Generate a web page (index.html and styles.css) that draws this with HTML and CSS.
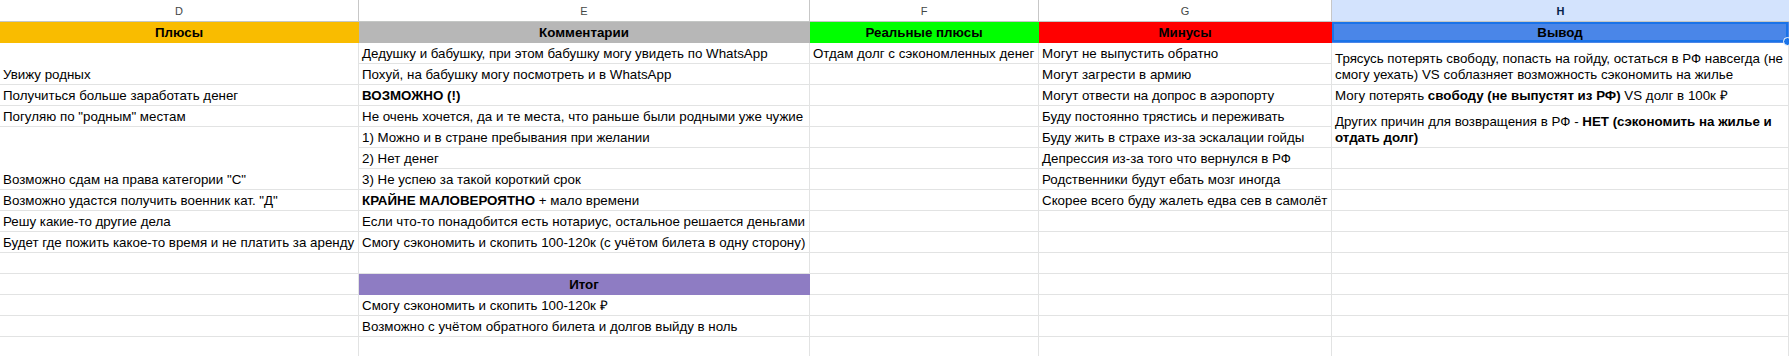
FILE: index.html
```html
<!DOCTYPE html>
<html lang="ru">
<head>
<meta charset="utf-8">
<title>Плюсы и минусы</title>
<link rel="stylesheet" href="styles.css">
</head>
<body>
<div class="sheet">
  <div class="col-heads">
    <div class="lh">D</div>
    <div class="lh">E</div>
    <div class="lh">F</div>
    <div class="lh">G</div>
    <div class="lh lh-sel">H</div>
  </div>
  <div class="grid">
    <div class="c hd hd-plus">Плюсы</div>
    <div class="c hd hd-comm">Комментарии</div>
    <div class="c hd hd-real">Реальные плюсы</div>
    <div class="c hd hd-minus">Минусы</div>
    <div class="c hd hd-out">Вывод<span class="sel-dot"></span></div>

    <div class="c span2">Увижу родных</div>
    <div class="c">Дедушку и бабушку, при этом бабушку могу увидеть по WhatsApp</div>
    <div class="c">Отдам долг с сэкономленных денег</div>
    <div class="c">Могут не выпустить обратно</div>
    <div class="c span2 wrap">Трясусь потерять свободу, попасть на гойду, остаться в РФ навсегда (не смогу уехать) VS соблазняет возможность сэкономить на жилье</div>

    <div class="c">Похуй, на бабушку могу посмотреть и в WhatsApp</div>
    <div class="c"></div>
    <div class="c">Могут загрести в армию</div>

    <div class="c">Получиться больше заработать денег</div>
    <div class="c"><b>ВОЗМОЖНО (!)</b></div>
    <div class="c"></div>
    <div class="c">Могут отвести на допрос в аэропорту</div>
    <div class="c"><span>Могу потерять <b>свободу (не выпустят из РФ)</b> VS долг в 100к ₽</span></div>

    <div class="c">Погуляю по "родным" местам</div>
    <div class="c">Не очень хочется, да и те места, что раньше были родными уже чужие</div>
    <div class="c"></div>
    <div class="c">Буду постоянно трястись и переживать</div>
    <div class="c span2 wrap"><span>Других причин для возвращения в РФ - <b>НЕТ (сэкономить на жилье и отдать долг)</b></span></div>

    <div class="c span3">Возможно сдам на права категории "С"</div>
    <div class="c">1) Можно и в стране пребывания при желании</div>
    <div class="c"></div>
    <div class="c">Буду жить в страхе из-за эскалации гойды</div>

    <div class="c">2) Нет денег</div>
    <div class="c"></div>
    <div class="c">Депрессия из-за того что вернулся в РФ</div>
    <div class="c"></div>

    <div class="c">3) Не успею за такой короткий срок</div>
    <div class="c"></div>
    <div class="c">Родственники будут ебать мозг иногда</div>
    <div class="c"></div>

    <div class="c">Возможно удастся получить военник кат. "Д"</div>
    <div class="c"><span><b>КРАЙНЕ МАЛОВЕРОЯТНО</b> + мало времени</span></div>
    <div class="c"></div>
    <div class="c">Скорее всего буду жалеть едва сев в самолёт</div>
    <div class="c"></div>

    <div class="c">Решу какие-то другие дела</div>
    <div class="c">Если что-то понадобится есть нотариус, остальное решается деньгами</div>
    <div class="c"></div>
    <div class="c"></div>
    <div class="c"></div>

    <div class="c">Будет где пожить какое-то время и не платить за аренду</div>
    <div class="c">Смогу сэкономить и скопить 100-120к (с учётом билета в одну сторону)</div>
    <div class="c"></div>
    <div class="c"></div>
    <div class="c"></div>

    <div class="c"></div>
    <div class="c"></div>
    <div class="c"></div>
    <div class="c"></div>
    <div class="c"></div>

    <div class="c"></div>
    <div class="c hd hd-total">Итог</div>
    <div class="c"></div>
    <div class="c"></div>
    <div class="c"></div>

    <div class="c"></div>
    <div class="c">Смогу сэкономить и скопить 100-120к ₽</div>
    <div class="c"></div>
    <div class="c"></div>
    <div class="c"></div>

    <div class="c"></div>
    <div class="c">Возможно с учётом обратного билета и долгов выйду в ноль</div>
    <div class="c"></div>
    <div class="c"></div>
    <div class="c"></div>

    <div class="c"></div>
    <div class="c"></div>
    <div class="c"></div>
    <div class="c"></div>
    <div class="c"></div>
  </div>
</div>
</body>
</html>
```
FILE: styles.css
```css
html, body {
  margin: 0;
  padding: 0;
  background: #ffffff;
  overflow: hidden;
}

.sheet {
  width: 1789px;
  font-family: "Liberation Sans", Arial, sans-serif;
  color: #000000;
}

.col-heads,
.grid {
  display: grid;
  grid-template-columns: 359px 451px 229px 293px 457px;
}

.col-heads {
  height: 22px;
}

.lh {
  box-sizing: border-box;
  height: 22px;
  border-right: 1px solid #c7c7c7;
  border-bottom: 1px solid #c4c7c5;
  display: flex;
  align-items: center;
  justify-content: center;
  font-size: 11px;
  color: #444746;
  background: #ffffff;
}

.lh-sel {
  background: #d3e3fd;
  color: #041e49;
  font-weight: bold;
  border-right: none;
}

.grid {
  grid-auto-rows: 21px;
}

.c {
  box-sizing: border-box;
  min-width: 0;
  border-right: 1px solid #e2e3e3;
  border-bottom: 1px solid #e2e3e3;
  padding: 0 3px 1px 3px;
  display: flex;
  align-items: flex-end;
  white-space: nowrap;
  overflow: hidden;
  font-size: 13.33px;
  line-height: 16px;
}

.span2 {
  grid-row: span 2;
}

.span3 {
  grid-row: span 3;
}

.wrap {
  white-space: normal;
}

.hd {
  justify-content: center;
  font-weight: bold;
  border-color: transparent;
}

.hd-plus { background: #f9bc00; }
.hd-comm { background: #b7b7b7; }
.hd-real { background: #00ff00; }
.hd-minus { background: #ff0000; }
.hd-total { background: #8e7cc3; }

.hd-out {
  background: #4a86e8;
  box-shadow: inset 0 0 0 2px #1a73e8;
  position: relative;
  overflow: visible;
  z-index: 2;
}

.sel-dot {
  position: absolute;
  right: -4px;
  bottom: -4px;
  width: 7px;
  height: 7px;
  border-radius: 50%;
  background: #1a73e8;
  border: 1px solid #ffffff;
}
```
